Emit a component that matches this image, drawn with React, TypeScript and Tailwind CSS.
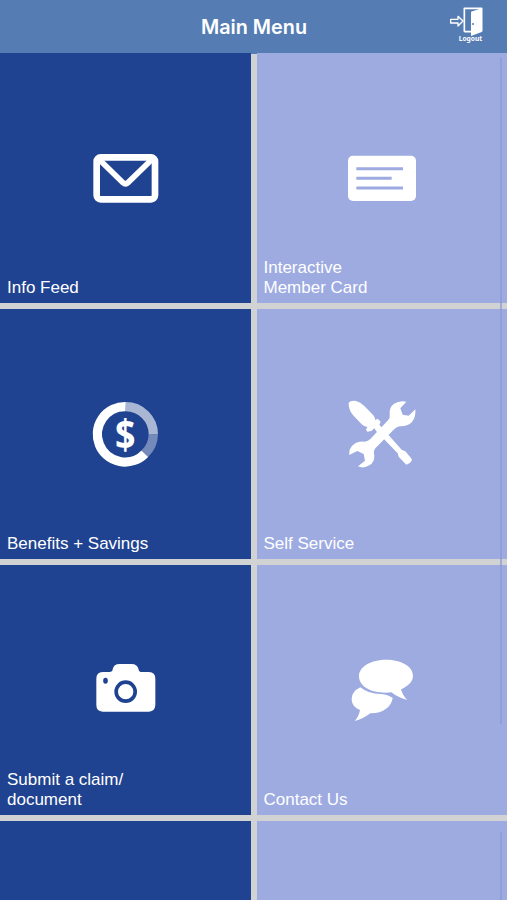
import type { ReactNode } from 'react'

interface MenuTile {
  id: string
  label: string
  icon?: ReactNode
}

function EnvelopeIcon() {
  return (
    <svg className="h-[90px] w-[90px]" viewBox="0 0 270 270" fill="none" stroke="#fff">
      <rect x="50" y="70" width="175" height="126" rx="12" strokeWidth="20" />
      <path d="M60 79 L129 146 Q136.500 153 144 146 L213 79" strokeWidth="17" strokeLinejoin="round" />
    </svg>
  )
}

function CardIcon() {
  return (
    <svg className="h-[90px] w-[90px]" viewBox="0 0 270 270" fill="none">
      <rect x="33" y="65" width="204" height="136" rx="15" fill="#fff" />
      <path d="M58 104 H198 M58 133 H164 M58 162 H198" stroke="#9dabe1" strokeWidth="9" />
    </svg>
  )
}

function SavingsIcon() {
  return (
    <svg className="h-[90px] w-[90px]" viewBox="0 0 270 270" fill="none" stroke="#fff" strokeWidth="28">
      <path d="M194.500 191 A83 83 0 1 1 137 50" />
      <path d="M137 50 A83 83 0 0 1 220 133" opacity="0.62" />
      <path d="M220 133 A83 83 0 0 1 194.500 191" opacity="0.38" />
      <text
        x="0"
        y="0"
        transform="translate(136 178) scale(0.95 1.1)"
        textAnchor="middle"
        fill="#fff"
        stroke="none"
        fontSize="113"
        className="font-['Noto_Sans',sans-serif] font-bold"
      >
        $
      </text>
    </svg>
  )
}

function ToolsIcon() {
  return (
    <svg className="h-[90px] w-[90px]" viewBox="0 0 270 270" fill="#fff">
      {/* screwdriver */}
      <path d="M35 38 Q40 31 57 33 Q70 36 82 48 L109 76 Q114 82 115 90 L122 86 L131 95 L127 104 L134 112 L194 179 L205 184 L225 208 Q222 221 208 224 L185 200 L182 190 L118 124 L112 115 L103 123 L91 125 L87 119 L91 111 Q82 111 74 103 L47 74 Q34 57 35 38 Z" />
      {/* wrench */}
      <path d="M208 35 Q188 30 171 41 Q156 52 158 73 Q160 84 153 91 L100 147 Q94 154 83 155 Q59 153 45 168 Q35 179 37 195 L61 183 L80 192 L84 212 L63 229 Q80 237 97 226 Q113 216 112 197 Q108 183 115 175 L170 119 Q177 111 188 109 Q211 110 225 96 Q237 82 235 58 L215 77 L197 74 L190 55 Z" />
    </svg>
  )
}

function CameraIcon() {
  return (
    <svg className="h-[90px] w-[90px]" viewBox="0 0 270 270" fill="#fff">
      <path d="M68 78 H88 Q98 78 98 70 Q101 54 119 54 H154 Q173 54 176 71 Q177 78 186 78 H207 Q226 79 226 98 V177 Q225 196 207 197 H68 Q49 196 49 177 V98 Q49 79 68 78 Z" />
      <circle cx="137" cy="137" r="28.500" stroke="#1f4390" strokeWidth="11" />
      <ellipse cx="76.500" cy="104" rx="7" ry="9" fill="#1f4390" />
    </svg>
  )
}

function ChatIcon() {
  return (
    <svg className="h-[90px] w-[90px]" viewBox="0 0 270 270" fill="#fff">
      <path d="M148 41 C191 41 228 60 228 90 C228 107 212 121 192 130 Q197 149 211 162 Q182 154 163 139 C113 145 66 126 66 91 C66 61 103 41 148 41 Z" />
      <path d="M70 124 Q96 145 133 144 Q150 145 167 155 C165 181 137 203 100 202 Q78 219 53 225 Q66 211 69 192 C52 184 44 174 44 158 Q44 137 70 124 Z" />
    </svg>
  )
}

function LogoutIcon() {
  return (
    <svg className="h-[29px] w-[35px]" viewBox="0 0 105 87" fill="none" stroke="#fff" strokeLinejoin="round">
      <path d="M5 37 H27 V28 L42 42 L27 57 V48 H5 Z" strokeWidth="4" />
      <path d="M46 74 V4 H98 V72 H68 M46 74 H66" strokeWidth="5" />
      <path d="M66 14 L98 4 V75 L66 87 Z" fill="#fff" stroke="none" />
      <circle cx="72" cy="51" r="3" fill="#557db4" stroke="none" />
    </svg>
  )
}

const TILES: MenuTile[] = [
  { id: 'feed', label: 'Info Feed', icon: <EnvelopeIcon /> },
  { id: 'card', label: 'Interactive\nMember Card', icon: <CardIcon /> },
  { id: 'savings', label: 'Benefits + Savings', icon: <SavingsIcon /> },
  { id: 'service', label: 'Self Service', icon: <ToolsIcon /> },
  { id: 'claim', label: 'Submit a claim/\ndocument', icon: <CameraIcon /> },
  { id: 'contact', label: 'Contact Us', icon: <ChatIcon /> },
  { id: 'more-left', label: '' },
  { id: 'more-right', label: '' },
]

export default function App() {
  return (
    <div className="relative flex h-[900px] w-[507px] flex-col overflow-hidden bg-[#d0d2d4] font-['Liberation_Sans',Arial,sans-serif] text-white">
      <header className="grid h-[53.5px] shrink-0 grid-cols-[1fr_auto_1fr] items-center bg-[#557db4]">
        <h1 className="col-start-2 pl-px font-['Inter',sans-serif] text-[19.8px] leading-6 font-semibold">Main Menu</h1>
        <button className="mr-[23px] mb-[4px] flex flex-col items-center justify-self-end">
          <LogoutIcon />
          <span className="-mt-px pl-2 font-['Noto_Sans',sans-serif] text-[6.7px] leading-[7px] font-bold">Logout</span>
        </button>
      </header>

      <main className="-mt-[0.5px] grid auto-rows-[250px] grid-cols-[251px_250px] gap-1.5">
        {TILES.map((tile) => (
          <section key={tile.id} className="group grid odd:bg-[#1f4390] even:bg-[#9dabe1]">
            <div className="col-start-1 row-start-1 place-self-center pt-0.5 group-odd:pr-[0.5px]">{tile.icon}</div>
            <p className="col-start-1 row-start-1 self-end pb-[6px] pl-[7px] text-[17px] leading-[19.5px] whitespace-pre-line group-even:pl-[6.5px]">
              {tile.label}
            </p>
          </section>
        ))}
      </main>

      {/* scroll indicators */}
      <div className="absolute top-[58px] right-[5px] h-[666px] w-0.5 bg-[#8c9bcf]/70" />
      <div className="absolute top-[832px] right-[5px] h-[68px] w-0.5 bg-[#8c9bcf]/70" />
    </div>
  )
}
